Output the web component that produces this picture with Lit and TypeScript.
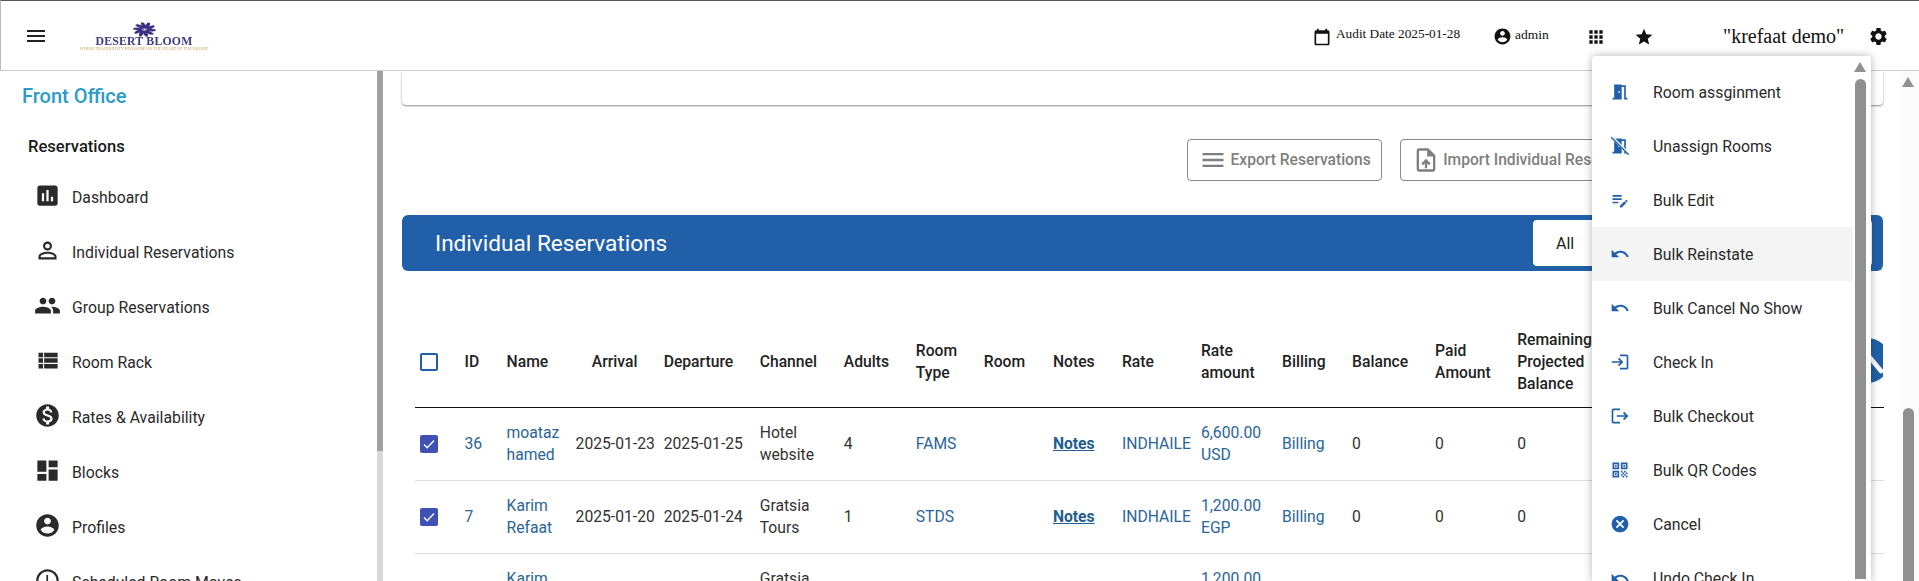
import { LitElement, html, css, svg } from "lit";
import { customElement } from "lit/decorators.js";

const P: Record<string, string> = {
  menu: "M3 18h18v-2H3v2zm0-5h18v-2H3v2zm0-7v2h18V6H3z",
  assessment: "M19 3H5c-1.1 0-2 .9-2 2v14c0 1.1.9 2 2 2h14c1.1 0 2-.9 2-2V5c0-1.1-.9-2-2-2zM9 17H7v-7h2v7zm4 0h-2V7h2v10zm4 0h-2v-4h2v4z",
  person: "M12 5.9c1.16 0 2.1.94 2.1 2.1s-.94 2.1-2.1 2.1S9.9 9.16 9.9 8s.94-2.1 2.1-2.1m0 9c2.97 0 6.1 1.46 6.1 2.1v1.1H5.9V17c0-.64 3.13-2.1 6.1-2.1M12 4C9.79 4 8 5.79 8 8s1.79 4 4 4 4-1.79 4-4-1.79-4-4-4zm0 9c-2.67 0-8 1.34-8 4v3h16v-3c0-2.66-5.33-4-8-4z",
  people: "M16 11c1.66 0 2.99-1.34 2.99-3S17.66 5 16 5c-1.66 0-3 1.34-3 3s1.34 3 3 3zm-8 0c1.66 0 2.99-1.34 2.99-3S9.66 5 8 5C6.34 5 5 6.34 5 8s1.34 3 3 3zm0 2c-2.33 0-7 1.17-7 3.5V19h14v-2.5c0-2.33-4.67-3.5-7-3.5zm8 0c-.29 0-.62.02-.97.05 1.16.84 1.97 1.97 1.97 3.45V19h6v-2.5c0-2.33-4.67-3.5-7-3.5z",
  list: "M4 14h4v-4H4v4zm0 5h4v-4H4v4zM4 9h4V5H4v4zm5 5h12v-4H9v4zm0 5h12v-4H9v4zM9 5v4h12V5H9z",
  money: "M12 2C6.48 2 2 6.48 2 12s4.48 10 10 10 10-4.48 10-10S17.52 2 12 2zm1.41 16.09V20h-2.67v-1.93c-1.71-.36-3.16-1.46-3.27-3.4h1.96c.1 1.05.82 1.87 2.65 1.87 1.96 0 2.4-.98 2.4-1.59 0-.83-.44-1.61-2.67-2.14-2.48-.6-4.18-1.62-4.18-3.67 0-1.72 1.39-2.84 3.11-3.21V4h2.67v1.95c1.86.45 2.79 1.86 2.85 3.39H14.3c-.05-1.11-.64-1.87-2.22-1.87-1.5 0-2.4.68-2.4 1.64 0 .84.65 1.39 2.67 1.91s4.18 1.39 4.18 3.91c-.01 1.83-1.38 2.83-3.12 3.16z",
  dash: "M3 13h8V3H3v10zm0 8h8v-6H3v6zm10 0h8V11h-8v10zm0-18v6h8V3h-8z",
  account: "M12 2C6.48 2 2 6.48 2 12s4.48 10 10 10 10-4.48 10-10S17.52 2 12 2zm0 3c1.66 0 3 1.34 3 3s-1.34 3-3 3-3-1.34-3-3 1.34-3 3-3zm0 14.2c-2.5 0-4.71-1.28-6-3.22.03-1.99 4-3.08 6-3.08 1.99 0 5.97 1.09 6 3.08-1.29 1.94-3.5 3.22-6 3.22z",
  clock: "M11.99 2C6.47 2 2 6.48 2 12s4.47 10 9.99 10C17.52 22 22 17.52 22 12S17.52 2 11.99 2zM12 20c-4.42 0-8-3.58-8-8s3.58-8 8-8 8 3.58 8 8-3.58 8-8 8zm.5-13H11v6l5.25 3.15.75-1.23-4.5-2.67z",
  calendar: "M19 4h-1V2h-2v2H8V2H6v2H5c-1.1 0-2 .9-2 2v14c0 1.1.9 2 2 2h14c1.1 0 2-.9 2-2V6c0-1.1-.9-2-2-2zm0 16H5V8h14v12z",
  apps: "M4 8h4V4H4v4zm6 12h4v-4h-4v4zm-6 0h4v-4H4v4zm0-6h4v-4H4v4zm6 0h4v-4h-4v4zm6-10v4h4V4h-4zm-6 4h4V4h-4v4zm6 6h4v-4h-4v4zm0 6h4v-4h-4v4z",
  star: "M12 17.27L18.18 21l-1.64-7.03L22 9.24l-7.19-.61L12 2 9.19 8.63 2 9.24l5.46 4.73L5.82 21z",
  gear: "M19.14 12.94c.04-.3.06-.61.06-.94 0-.32-.02-.64-.07-.94l2.03-1.58c.18-.14.23-.41.12-.61l-1.92-3.32c-.12-.22-.37-.29-.59-.22l-2.39.96c-.5-.38-1.03-.7-1.62-.94l-.36-2.54c-.04-.24-.24-.41-.48-.41h-3.84c-.24 0-.43.17-.47.41l-.36 2.54c-.59.24-1.13.57-1.62.94l-2.39-.96c-.22-.08-.47 0-.59.22L2.74 8.87c-.12.21-.08.47.12.61l2.03 1.58c-.05.3-.09.63-.09.94s.02.64.07.94l-2.03 1.58c-.18.14-.23.41-.12.61l1.92 3.32c.12.22.37.29.59.22l2.39-.96c.5.38 1.03.7 1.62.94l.36 2.54c.05.24.24.41.48.41h3.84c.24 0 .44-.17.47-.41l.36-2.54c.59-.24 1.13-.56 1.62-.94l2.39.96c.22.08.47 0 .59-.22l1.92-3.32c.12-.22.07-.47-.12-.61l-2.01-1.58zM12 15.6c-1.98 0-3.6-1.62-3.6-3.6s1.62-3.6 3.6-3.6 3.6 1.62 3.6 3.6-1.62 3.6-3.6 3.6z",
  door: "M14 6v15H3v-2h2V3h9v1h5v15h2v2h-4V6h-3zm-4 5v2h2v-2h-2z",
  edit: "M3 10h11v2H3zm0-2h11V6H3zm0 8h7v-2H3zm15.01-3.13l.71-.71c.39-.39 1.02-.39 1.41 0l.71.71c.39.39.39 1.02 0 1.41l-.71.71-2.12-2.12zm-.71.71l-5.3 5.3V21h2.12l5.3-5.3-2.12-2.12z",
  undo: "M12.5 8c-2.65 0-5.05.99-6.9 2.6L2 7v9h9l-3.62-3.62c1.39-1.16 3.16-1.88 5.12-1.88 3.54 0 6.55 2.31 7.6 5.5l2.37-.78C21.08 11.03 17.15 8 12.5 8z",
  login: "M11 7L9.6 8.4l2.6 2.6H2v2h10.2l-2.6 2.6L11 17l5-5-5-5zm9 12h-8v2h8c1.1 0 2-.9 2-2V5c0-1.1-.9-2-2-2h-8v2h8v14z",
  logout: "M17 7l-1.41 1.41L18.17 11H8v2h10.17l-2.58 2.58L17 17l5-5zM4 5h8V3H4c-1.1 0-2 .9-2 2v14c0 1.1.9 2 2 2h8v-2H4V5z",
  qr: "M3 11h8V3H3v8zm2-6h4v4H5V5zM3 21h8v-8H3v8zm2-6h4v4H5v-4zM13 3v8h8V3h-8zm6 6h-4V5h4v4zM19 19h2v2h-2zM13 13h2v2h-2zM15 15h2v2h-2zM13 17h2v2h-2zM15 19h2v2h-2zM17 17h2v2h-2zM17 13h2v2h-2zM19 15h2v2h-2zM6 6h2v2H6zM6 16h2v2H6zM16 6h2v2h-2z",
  cancel: "M12 2C6.47 2 2 6.47 2 12s4.47 10 10 10 10-4.47 10-10S17.53 2 12 2zm5 13.59L15.59 17 12 13.41 8.41 17 7 15.59 10.59 12 7 8.41 8.41 7 12 10.59 15.59 7 17 8.41 13.41 12 17 15.59z",
  upload: "M14 2H6c-1.1 0-1.99.9-1.99 2L4 20c0 1.1.89 2 1.99 2H18c1.1 0 2-.9 2-2V8l-6-6zm4 18H6V4h7v5h5v11zM8 15.01l1.41 1.41L11 14.84V19h2v-4.16l1.59 1.59L16 15.01 12.01 11z",
};

const icon = (n: string, size = 24) =>
  n === "nodoor"
    ? html`<svg class="ic" width=${size} height=${size} viewBox="0 0 24 24" fill="currentColor"><path d=${P.door}></path><path d="M2.5 1.5l20 20" stroke="#fff" stroke-width="3.2" fill="none"></path><path d="M1.5 1.5l21 21" stroke="currentColor" stroke-width="1.6" fill="none"></path></svg>`
    : html`<svg class="ic" width=${size} height=${size} viewBox="0 0 24 24" fill="currentColor"><path d=${P[n]}></path></svg>`;

const petals = Array.from({ length: 10 }, (_, i) => i * 36);

const side = [
  ["assessment", "Dashboard"],
  ["person", "Individual Reservations"],
  ["people", "Group Reservations"],
  ["list", "Room Rack"],
  ["money", "Rates & Availability"],
  ["dash", "Blocks"],
  ["account", "Profiles"],
  ["clock", "Scheduled Room Moves"],
];

const menu = [
  ["door", "Room assginment"],
  ["nodoor", "Unassign Rooms"],
  ["edit", "Bulk Edit"],
  ["undo", "Bulk Reinstate"],
  ["undo", "Bulk Cancel No Show"],
  ["login", "Check In"],
  ["logout", "Bulk Checkout"],
  ["qr", "Bulk QR Codes"],
  ["cancel", "Cancel"],
  ["undo", "Undo Check In"],
];

const cols = [50, 42, 69, 88, 96, 84, 72, 68, 69, 69, 79, 81, 70, 83, 82, 366];

const rows = [
  { id: "36", name: ["moataz", "hamed"], arr: "2025-01-23", dep: "2025-01-25", ch: ["Hotel", "website"], ad: "4", rt: "FAMS", amt: ["6,600.00", "USD"] },
  { id: "7", name: ["Karim", "Refaat"], arr: "2025-01-20", dep: "2025-01-24", ch: ["Gratsia", "Tours"], ad: "1", rt: "STDS", amt: ["1,200.00", "EGP"] },
  { id: "6", name: ["Karim", "Refaat"], arr: "2025-01-20", dep: "2025-01-24", ch: ["Gratsia", "Tours"], ad: "1", rt: "STDS", amt: ["1,200.00", "EGP"] },
];

const lines = (l: string[]) => l.map((t, i) => html`${i ? html`<br />` : ""}${t}`);

@customElement("app-root")
export class AppRoot extends LitElement {
  static styles = css`
    :host {
      display: block;
      position: relative;
      width: 1919px;
      height: 581px;
      overflow: hidden;
      background: #fff;
      font-family: Roboto, "Liberation Sans", sans-serif;
      color: #212121;
    }
    .ic { display: block; flex: none; }
    .page { display: flex; flex-direction: column; height: 581px; }
    .top {
      flex: none;
      height: 69px;
      border-top: 1px solid #555;
      border-left: 1px solid #bbb;
      border-bottom: 1px solid #ccc;
      display: flex;
      align-items: center;
      position: relative;
      z-index: 2;
      background: #fff;
      font-family: "Liberation Serif", serif;
      color: #111;
    }
    .burger { margin-left: 23px; color: #222; }
    .logo { margin-left: 30px; width: 132px; height: 40px; display: flex; flex-direction: column; align-items: center; filter: blur(0.4px); }
    .logo svg { display: block; margin: 6px 0 -1px; }
    .logo .ln { font-size: 11.8px; line-height: 10px; font-weight: 700; color: #3e3a80; letter-spacing: .2px; white-space: nowrap; }
    .logo .tg { font-size: 4.2px; line-height: 5px; color: #c8a565; white-space: nowrap; }
    .audit { margin-left: 1102px; display: flex; align-items: center; gap: 4px; font-size: 13.3px; width: 181px; padding-top: 2px; box-sizing: border-box; }
    .audit span, .user span { position: relative; top: -3px; white-space: nowrap; }
    .user span { top: -2px; }
    .user { display: flex; align-items: center; gap: 3px; font-size: 13.5px; width: 93px; padding-top: 2px; box-sizing: border-box; }
    .apps { width: 48px; padding-top: 2px; box-sizing: border-box; }
    .star { width: 89px; padding-top: 2px; box-sizing: border-box; }
    .brand { font-size: 20px; width: 145px; white-space: nowrap; padding-top: 2px; box-sizing: border-box; }
    .gear { padding-top: 2px; }
    .body { flex: 1; display: flex; min-height: 0; }
    .side { flex: none; width: 377px; padding: 13px 0 0 22px; box-sizing: border-box; overflow: hidden; }
    .fo { font-size: 20px; line-height: 24px; font-weight: 500; color: #2a9cc9; }
    .rs { font-size: 16.6px; line-height: 20px; font-weight: 500; color: #1a1a1a; margin: 29px 0 0 6px; }
    .item { display: flex; align-items: center; height: 55px; font-size: 15.8px; color: #2a2a2a; white-space: nowrap; }
    .item .ic { margin: 0 11.5px 4px 0; }
    .items { margin: 13px 0 0 11.5px; }
    .sb { flex: none; width: 6px; background: #d8d8d8; }
    .sb div { height: 380px; background: #a0a0a0; }
    .main { flex: 1; min-width: 0; padding: 0 0 0 19px; display: flex; }
    .content { width: 1481px; flex: none; }
    .card { height: 34px; background: #fff; border-radius: 0 0 4px 4px; box-shadow: 0 1px 2px rgba(0,0,0,.45); }
    .btns { display: flex; gap: 18px; margin: 34px 0 0 785px; white-space: nowrap; }
    .btn { flex: none; height: 40px; border: 1px solid #8a8a8a; border-radius: 4px; display: flex; align-items: center; color: #7f7f7f; font-size: 15.6px; font-weight: 500; padding: 0 10px 0 11px; gap: 3.5px; }
    .bar { height: 56px; margin-top: 34px; background: #2160a9; border-radius: 6px; display: flex; align-items: center; justify-content: space-between; padding: 0 11px 0 33px; color: #fff; font-size: 22.6px; }
    .sel { width: 339px; height: 46px; background: #fff; border-radius: 4px; color: #222; font-size: 16px; display: flex; align-items: center; padding-left: 23px; box-sizing: border-box; }
    .tw { position: relative; margin: 0 0 0 12.5px; }
    .fabclip { position: absolute; right: 0; top: 67px; width: 45px; height: 45px; overflow: hidden; }
    .fab { width: 45px; height: 45px; margin-left: 7px; border-radius: 50%; background: #2160a9; }
    table { border-collapse: collapse; table-layout: fixed; width: 1469px; }
    th, td { padding: 0; text-align: left; vertical-align: middle; font-size: 15.7px; line-height: 22px; }
    th { font-weight: 500; color: #222; height: 136px; border-bottom: 1px solid #111; padding-top: 46px; box-sizing: border-box; }
    th.c { text-align: center; padding-right: 10px; }
    td { height: 73px; color: #333; border-bottom: 1px solid #ddd; box-sizing: border-box; }
    .l { color: #2a6597; }
    .n { color: #1f5e8f; font-weight: 700; text-decoration: underline; }
    .chk { width: 18px; height: 18px; margin-left: 5px; box-sizing: border-box; border-radius: 2px; display: block; }
    .chk.off { border: 2px solid #2160a9; }
    .chk.on { background: #3f51b5; }
    .vs { flex: 1; position: relative; }
    .ps { position: absolute; left: 17px; right: 0; top: 0; bottom: 0; background: #fbfbfb; display: flex; flex-direction: column; align-items: center; padding-right: 3px; box-sizing: border-box; }
    .tri { width: 0; height: 0; border-left: 6px solid transparent; border-right: 6px solid transparent; border-bottom: 10px solid #909090; flex: none; }
    .thumb { width: 11px; background: #909090; border-radius: 6px 6px 0 0; flex: none; }
    .pop { position: absolute; z-index: 3; left: 1592px; top: 56px; width: 279px; height: 525px; background: #fff; border-radius: 4px 4px 0 0; box-shadow: 0 0 8px rgba(0,0,0,.3); display: flex; overflow: hidden; }
    .ml { width: 261px; flex: none; padding-top: 9px; }
    .mi { height: 54px; display: flex; align-items: center; font-size: 15.8px; color: #2a2a2a; padding-left: 18px; white-space: nowrap; box-sizing: border-box; }
    .mi .ic { color: #2160a9; margin-right: 23px; }
    .mi.h { background: #f4f4f4; }
    .msb { flex: 1; display: flex; flex-direction: column; align-items: center; padding: 6px 4px 0 0; box-sizing: border-box; }
    .msb .thumb { margin-top: 7px; height: 500px; }
  `;

  render() {
    return html`
      <div class="page">
        <div class="top">
          <div class="burger">${icon("menu", 24)}</div>
          <div class="logo">
            <svg width="23" height="15" viewBox="-11 -11 22 22" preserveAspectRatio="none">
              ${petals.map((a) => svg`<ellipse cx="1.2" cy="-6.4" rx="2" ry="4.4" fill="#3c2f86" transform="rotate(${a}) skewX(18)"></ellipse>`)}
              <circle r="2" fill="#3c2f86"></circle>
              <circle r="1" fill="#fff"></circle>
            </svg>
            <div class="ln">DESERT BLOOM</div>
            <div class="tg">WHERE TRANQUILITY BLOSSOMS IN THE HEART OF THE DESERT</div>
          </div>
          <div class="audit">${icon("calendar", 20)}<span>Audit Date 2025-01-28</span></div>
          <div class="user">${icon("account", 19)}<span>admin</span></div>
          <div class="apps">${icon("apps", 20)}</div>
          <div class="star">${icon("star", 20)}</div>
          <div class="brand">"krefaat demo"</div>
          <div class="gear">${icon("gear", 21)}</div>
        </div>
        <div class="body">
          <div class="side">
            <div class="fo">Front Office</div>
            <div class="rs">Reservations</div>
            <div class="items">
              ${side.map(([i, t]) => html`<div class="item">${icon(i, 27)}${t}</div>`)}
            </div>
          </div>
          <div class="sb"><div></div></div>
          <div class="main">
            <div class="content">
              <div class="card"></div>
              <div class="btns">
                <div class="btn">${icon("menu", 28)}Export Reservations</div>
                <div class="btn">${icon("upload", 28)}Import Individual Reservations</div>
              </div>
              <div class="bar"><span>Individual Reservations</span><div class="sel">All</div></div>
              <div class="tw">
                <div class="fabclip">
                  <div class="fab">
                    <svg width="45" height="45" viewBox="0 0 45 45"><path d="M22 16l14 17" stroke="#fff" stroke-width="4.5" stroke-linecap="round"></path></svg>
                  </div>
                </div>
                <table>
                  <colgroup>${cols.map((w) => html`<col style="width:${w}px" />`)}</colgroup>
                  <thead>
                    <tr>
                      <th><span class="chk off"></span></th>
                      <th>ID</th><th>Name</th><th class="c">Arrival</th><th>Departure</th><th>Channel</th><th>Adults</th>
                      <th>Room<br />Type</th><th>Room</th><th>Notes</th><th>Rate</th><th>Rate<br />amount</th><th>Billing</th><th>Balance</th>
                      <th>Paid<br />Amount</th><th>Remaining<br />Projected<br />Balance</th>
                    </tr>
                  </thead>
                  <tbody>
                    ${rows.map((r) => html`
                      <tr>
                        <td>
                          <span class="chk on">
                            <svg width="18" height="18" viewBox="0 0 18 18" fill="none" stroke="#fff" stroke-width="1.3"><path d="M4 9.5l3.2 3.2L14 5.5"></path></svg>
                          </span>
                        </td>
                        <td class="l">${r.id}</td>
                        <td class="l">${lines(r.name)}</td>
                        <td>${r.arr}</td>
                        <td>${r.dep}</td>
                        <td>${lines(r.ch)}</td>
                        <td>${r.ad}</td>
                        <td class="l">${r.rt}</td>
                        <td></td>
                        <td><span class="n">Notes</span></td>
                        <td class="l">INDHAILE</td>
                        <td class="l">${lines(r.amt)}</td>
                        <td class="l">Billing</td>
                        <td>0</td><td>0</td><td>0</td>
                      </tr>`)}
                  </tbody>
                </table>
              </div>
            </div>
            <div class="vs">
              <div class="ps">
                <div class="tri" style="margin-top:6px"></div>
                <div class="thumb" style="margin-top:321px;height:200px"></div>
              </div>
            </div>
          </div>
        </div>
      </div>
      <div class="pop">
        <div class="ml">
          ${menu.map(([i, t], idx) => html`<div class="mi ${idx === 3 ? "h" : ""}">${icon(i, 20)}${t}</div>`)}
        </div>
        <div class="msb"><div class="tri"></div><div class="thumb"></div></div>
      </div>
    `;
  }
}
